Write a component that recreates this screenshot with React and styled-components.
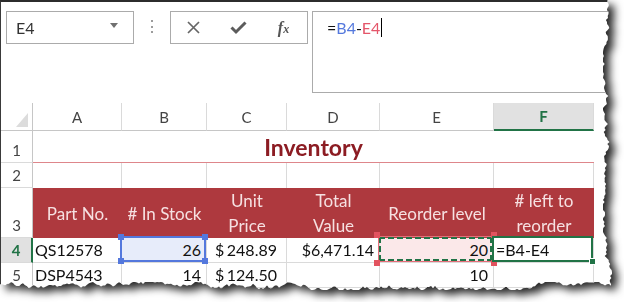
import styled, { createGlobalStyle } from 'styled-components';

const GREEN = '#217346';
const GRID = '#dadada';
const HEAD_LINE = '#c6c6c6';

// jagged "torn paper" outline for the right and bottom edges
const tornEdge = (w, h) => {
  let s = 48271;
  const rnd = () => {
    s = (s * 16807) % 2147483647;
    return s / 2147483647;
  };
  const pts = ['0 0'];
  let x = w - 4;
  for (let y = 0; y < h - 5; y += 2) {
    x = Math.min(w, Math.max(w - 9, x + (rnd() - 0.5) * 4.5));
    pts.push(`${x.toFixed(1)}px ${y}px`);
  }
  let y = h - 4;
  for (let px = Math.round(x); px >= 0; px -= 2) {
    y = Math.min(h, Math.max(h - 8, y + (rnd() - 0.5) * 4.5));
    pts.push(`${px}px ${y.toFixed(1)}px`);
  }
  pts.push(`0 ${y.toFixed(1)}px`);
  return `polygon(${pts.join(', ')})`;
};

const TORN = tornEdge(612, 290);

const GlobalStyle = createGlobalStyle`
  html, body {
    margin: 0;
    padding: 0;
    background: #fff;
  }
  body {
    font-family: Lato, "Liberation Sans", sans-serif;
  }
`;

const Shadow = styled.div`
  width: 624px;
  height: 302px;
  filter: drop-shadow(6px 5px 4px rgba(0, 0, 0, 0.85));
`;

const Paper = styled.div`
  width: 612px;
  height: 290px;
  box-sizing: border-box;
  background: #fff;
  border-top: 2px solid #2c2c2c;
  border-left: 1px solid #3a3a3a;
  overflow: hidden;
  clip-path: ${TORN};
`;

const FormulaBar = styled.div`
  display: flex;
  align-items: flex-start;
  height: 101px;
  box-sizing: border-box;
  padding: 9px 0 0 5px;
`;

const NameBox = styled.div`
  width: 128px;
  height: 33px;
  box-sizing: border-box;
  border: 1px solid #ababab;
  display: flex;
  align-items: center;
  justify-content: space-between;
  padding: 0 15px 0 9px;
  font-size: 16px;
  color: #333;
`;

const DropArrow = styled.span`
  width: 0;
  height: 0;
  border-left: 4px solid transparent;
  border-right: 4px solid transparent;
  border-top: 5px solid #707070;
  margin-top: -4px;
`;

const Grip = styled.div`
  display: flex;
  flex-direction: column;
  gap: 3.5px;
  margin: 9px 17px 0 17px;
`;

const Dot = styled.span`
  width: 2px;
  height: 2px;
  background: #9c9c9c;
`;

const ButtonBox = styled.div`
  width: 138px;
  height: 33px;
  box-sizing: border-box;
  border: 1px solid #ababab;
  display: flex;
  align-items: center;
`;

const IconSlot = styled.span`
  width: 45px;
  display: flex;
  justify-content: center;
  align-items: center;
`;

const Fx = styled.span`
  font-family: "Liberation Serif", serif;
  font-style: italic;
  font-weight: bold;
  font-size: 16px;
  color: #555;
  line-height: 1;

  sub {
    font-size: 12px;
    vertical-align: 0;
  }
`;

const FormulaInput = styled.div`
  flex: 1;
  margin-left: 4px;
  height: 82px;
  box-sizing: border-box;
  border: 1px solid #ababab;
  border-right: none;
  padding: 6px 0 0 14px;
  font-size: 16px;
  line-height: 19px;
  color: #111;
  white-space: nowrap;
`;

const Ref = styled.span`
  color: ${(p) => p.$color};
`;

const Caret = styled.span`
  display: inline-block;
  width: 1px;
  height: 19px;
  background: #000;
  vertical-align: top;
  margin-left: 1px;
`;

const Sheet = styled.div`
  display: grid;
  grid-template-columns: 32px 89px 85px 80px 93px 114px 100px;
  grid-template-rows: 28px 32px 25px 50px 25px 25px;
  width: 593px;
`;

const Corner = styled.div`
  position: relative;
  border-right: 1px solid ${HEAD_LINE};
  border-bottom: 1px solid ${HEAD_LINE};

  &::after {
    content: '';
    position: absolute;
    right: 4px;
    bottom: 3px;
    width: 12px;
    height: 14px;
    background: #dcdcdc;
    clip-path: polygon(100% 0, 100% 100%, 0 100%);
  }
`;

const ColHead = styled.div`
  box-sizing: border-box;
  display: flex;
  align-items: center;
  justify-content: center;
  font-size: 15px;
  color: ${(p) => (p.$active ? GREEN : '#444')};
  font-weight: ${(p) => (p.$active ? 'bold' : 'normal')};
  background: ${(p) => (p.$active ? '#e1e1e1' : '#fff')};
  border-right: 1px solid ${GRID};
  border-bottom: ${(p) => (p.$active ? `2px solid ${GREEN}` : `1px solid ${HEAD_LINE}`)};
`;

const RowHead = styled.div`
  box-sizing: border-box;
  display: flex;
  align-items: flex-end;
  justify-content: center;
  padding-bottom: 3px;
  font-size: 15px;
  color: ${(p) => (p.$active ? GREEN : '#444')};
  font-weight: ${(p) => (p.$active ? 'bold' : 'normal')};
  background: ${(p) => (p.$active ? '#e1e1e1' : '#fff')};
  border-right: ${(p) => (p.$active ? `2px solid ${GREEN}` : `1px solid ${HEAD_LINE}`)};
  border-bottom: 1px solid ${GRID};
`;

const Title = styled.div`
  grid-column: 2 / span 6;
  display: flex;
  align-items: flex-end;
  justify-content: center;
  padding-bottom: 1px;
  font-size: 23px;
  font-weight: bold;
  color: #8c1c23;
  border-bottom: 1px solid #de868b;
`;

const Cell = styled.div`
  position: relative;
  box-sizing: border-box;
  display: flex;
  align-items: flex-end;
  justify-content: ${(p) =>
    p.$align === 'right' ? 'flex-end' : p.$align === 'split' ? 'space-between' : 'flex-start'};
  padding: ${(p) => (p.$align === 'split' ? '0 9px 3px 8px' : '0 5px 3px 2px')};
  font-size: 16px;
  color: #111;
  white-space: nowrap;
  background: ${(p) => p.$fill || 'transparent'};
  border-right: 1px solid ${GRID};
  border-bottom: ${(p) => (p.$open ? 'none' : `1px solid ${GRID}`)};
`;

const HeadCell = styled.div`
  display: flex;
  align-items: center;
  justify-content: center;
  text-align: center;
  background: #ae393e;
  color: #f6e0e1;
  font-size: 17px;
  line-height: 25px;
  white-space: nowrap;
`;

const Frame = styled.span`
  position: absolute;
  top: -2px;
  left: -2px;
  right: 0;
  bottom: 0;
  z-index: 2;
  border: ${(p) => p.$width}px solid ${(p) => p.$color};
  pointer-events: none;
`;

const Ants = styled.span`
  position: absolute;
  inset: 0;
  background:
    linear-gradient(90deg, ${GREEN} 6px, transparent 6px) top left / 9px 2px repeat-x,
    linear-gradient(90deg, ${GREEN} 6px, transparent 6px) bottom left / 9px 2px repeat-x,
    linear-gradient(180deg, ${GREEN} 6px, transparent 6px) top left / 2px 9px repeat-y,
    linear-gradient(180deg, ${GREEN} 6px, transparent 6px) top right / 2px 9px repeat-y;
`;

const Handle = styled.span`
  position: absolute;
  width: ${(p) => p.$size || 6}px;
  height: ${(p) => p.$size || 6}px;
  background: ${(p) => p.$color};
  ${(p) => (p.$at.includes('t') ? 'top' : 'bottom')}: -${(p) => p.$off || 4}px;
  ${(p) => (p.$at.includes('l') ? 'left' : 'right')}: -${(p) => p.$off || 4}px;
  ${(p) => p.$ring && 'box-shadow: 0 0 0 1px #fff;'}
`;

const Corners = ({ color, off, size }) =>
  ['tl', 'tr', 'bl', 'br'].map((at) => <Handle key={at} $at={at} $color={color} $off={off} $size={size} />);

const XIcon = () => (
  <svg width="13" height="13" viewBox="0 0 13 13">
    <path d="M1 1 L12 12 M12 1 L1 12" stroke="#666" strokeWidth="1.7" fill="none" />
  </svg>
);

const CheckIcon = () => (
  <svg width="17" height="14" viewBox="0 0 17 14">
    <path d="M1.5 6.5 L6 11 L15.5 1.5" stroke="#5c5c5c" strokeWidth="3" fill="none" />
  </svg>
);

const App = () => {
  return (
    <>
      <GlobalStyle />
      <Shadow>
        <Paper>
          <FormulaBar>
            <NameBox>
              E4
              <DropArrow />
            </NameBox>
            <Grip>
              <Dot />
              <Dot />
              <Dot />
            </Grip>
            <ButtonBox>
              <IconSlot>
                <XIcon />
              </IconSlot>
              <IconSlot>
                <CheckIcon />
              </IconSlot>
              <IconSlot>
                <Fx>
                  f<sub>x</sub>
                </Fx>
              </IconSlot>
            </ButtonBox>
            <FormulaInput>
              =<Ref $color="#5478dd">B4</Ref>-<Ref $color="#e4566a">E4</Ref>
              <Caret />
            </FormulaInput>
          </FormulaBar>

          <Sheet>
            <Corner />
            <ColHead>A</ColHead>
            <ColHead>B</ColHead>
            <ColHead>C</ColHead>
            <ColHead>D</ColHead>
            <ColHead>E</ColHead>
            <ColHead $active>F</ColHead>

            <RowHead>1</RowHead>
            <Title>Inventory</Title>

            <RowHead>2</RowHead>
            <Cell $open />
            <Cell $open />
            <Cell $open />
            <Cell $open />
            <Cell $open />
            <Cell $open />

            <RowHead>3</RowHead>
            <HeadCell>Part No.</HeadCell>
            <HeadCell># In Stock</HeadCell>
            <HeadCell>
              Unit
              <br />
              Price
            </HeadCell>
            <HeadCell>
              Total
              <br />
              Value
            </HeadCell>
            <HeadCell>Reorder level</HeadCell>
            <HeadCell>
              # left to
              <br />
              reorder
            </HeadCell>

            <RowHead $active>4</RowHead>
            <Cell>QS12578</Cell>
            <Cell $align="right" $fill="#e7ecfa">
              26
              <Frame $width={2} $color="#5478dd">
                <Corners color="#5478dd" />
              </Frame>
            </Cell>
            <Cell $align="split">
              <span>$</span>
              <span>248.89</span>
            </Cell>
            <Cell $align="right">$6,471.14</Cell>
            <Cell $align="right" $fill="#fbe8e9">
              20
              <Frame $width={1} $color="#e4707a">
                <Ants />
                <Corners color="#e2535f" off={5} />
              </Frame>
            </Cell>
            <Cell>
              =B4-E4
              <Frame $width={2} $color={GREEN}>
                <Handle $at="br" $color={GREEN} $size={5} $off={4} $ring />
              </Frame>
            </Cell>

            <RowHead>5</RowHead>
            <Cell>DSP4543</Cell>
            <Cell $align="right">14</Cell>
            <Cell $align="split">
              <span>$</span>
              <span>124.50</span>
            </Cell>
            <Cell />
            <Cell $align="right">10</Cell>
            <Cell />
          </Sheet>
        </Paper>
      </Shadow>
    </>
  );
};

export default App;
